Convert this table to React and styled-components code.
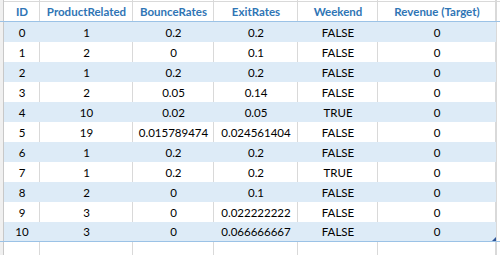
import React from "react";
import styled, { createGlobalStyle } from "styled-components";

const GlobalStyle = createGlobalStyle`
  html, body {
    margin: 0;
    padding: 0;
    background: #ffffff;
  }
  body {
    font-family: Lato, "Liberation Sans", Arial, sans-serif;
  }
`;

const COLS = "4px 36px 93px 81px 84px 80px 118px 1fr";
const GRID = "#d9d9d9";
const BAND = "#ddebf7";
const ACCENT = "#9bc2e6";

const headers = ["ID", "ProductRelated", "BounceRates", "ExitRates", "Weekend", "Revenue (Target)"];

const rows = [
  ["0", "1", "0.2", "0.2", "FALSE", "0"],
  ["1", "2", "0", "0.1", "FALSE", "0"],
  ["2", "1", "0.2", "0.2", "FALSE", "0"],
  ["3", "2", "0.05", "0.14", "FALSE", "0"],
  ["4", "10", "0.02", "0.05", "TRUE", "0"],
  ["5", "19", "0.015789474", "0.024561404", "FALSE", "0"],
  ["6", "1", "0.2", "0.2", "FALSE", "0"],
  ["7", "1", "0.2", "0.2", "TRUE", "0"],
  ["8", "2", "0", "0.1", "FALSE", "0"],
  ["9", "3", "0", "0.022222222", "FALSE", "0"],
  ["10", "3", "0", "0.066666667", "FALSE", "0"],
];

const App = () => {
  return (
    <>
      <GlobalStyle />
      <Sheet>
        <GridRow $height={1} $line>
          <Gutter />
          {headers.map((h) => (
            <Cell key={h} />
          ))}
          <Tail />
        </GridRow>

        <GridRow $height={19} $accent>
          <Gutter />
          {headers.map((h) => (
            <HeadCell key={h}>{h}</HeadCell>
          ))}
          <Tail />
        </GridRow>

        {rows.map((r, i) => (
          <GridRow
            key={r[0]}
            $height={i === rows.length - 1 ? 19 : 20}
            $accent={i === rows.length - 1}
          >
            <Gutter />
            {r.map((v, j) => (
              <Cell key={j} $band={i % 2 === 0}>
                {v}
                {i === rows.length - 1 && j === r.length - 1 && <ResizeHandle />}
              </Cell>
            ))}
            <Tail />
          </GridRow>
        ))}

        <GridRow $height={20} $line>
          <Gutter />
          {headers.map((h) => (
            <Cell key={h} />
          ))}
          <Tail />
        </GridRow>
      </Sheet>
    </>
  );
};

const Sheet = styled.div`
  width: 500px;
  height: 255px;
  overflow: hidden;
  display: flex;
  flex-direction: column;
`;

const GridRow = styled.div`
  display: grid;
  grid-template-columns: ${COLS};
  height: ${(p) => p.$height}px;
  flex: none;
  border-bottom: ${(p) =>
    p.$accent ? `1px solid ${ACCENT}` : p.$line ? `1px solid ${GRID}` : "none"};
`;

const Gutter = styled.div`
  background: #f0f0f0;
  box-shadow: inset -1px 0 #c8c8c8;
`;

const Tail = styled.div`
  box-shadow: inset 1px 0 ${GRID};
`;

const Cell = styled.div`
  position: relative;
  display: flex;
  align-items: flex-end;
  justify-content: center;
  padding-bottom: 2px;
  box-sizing: border-box;
  font-size: 11.5px;
  line-height: 14px;
  color: #000000;
  white-space: nowrap;
  background: ${(p) => (p.$band ? BAND : "transparent")};
  box-shadow: ${(p) => (p.$band ? "none" : `inset -1px 0 ${GRID}`)};
`;

const HeadCell = styled(Cell)`
  font-weight: bold;
  color: #2f75b5;
`;

const ResizeHandle = styled.span`
  position: absolute;
  right: 0;
  bottom: 0;
  width: 0;
  height: 0;
  border-left: 4px solid transparent;
  border-bottom: 4px solid #2f5597;
`;

export default App;
